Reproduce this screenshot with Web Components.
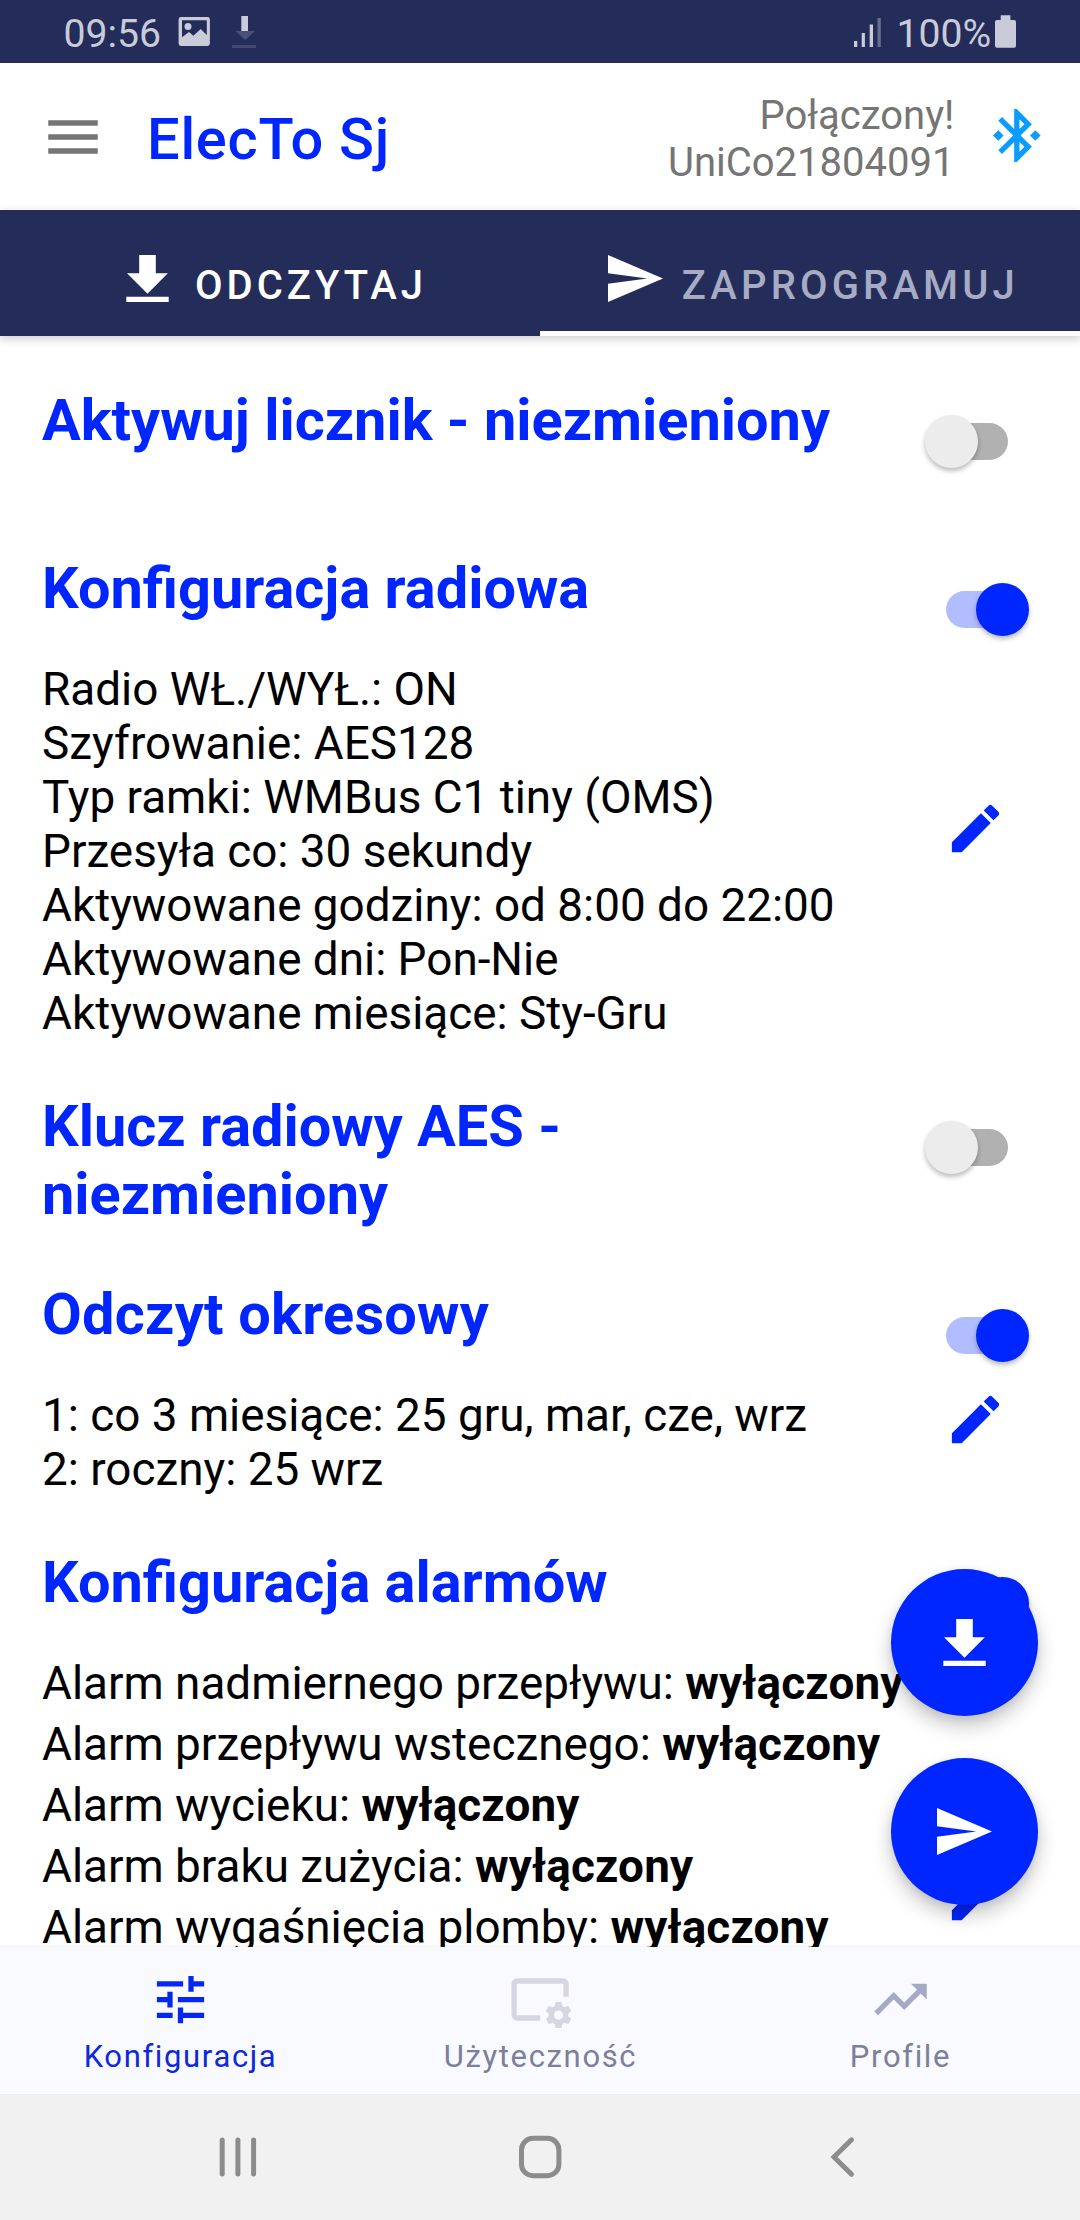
<!DOCTYPE html>
<html lang="pl">
<head>
<meta charset="utf-8">
<title>ElecTo Sj</title>
<style>
  html, body { margin: 0; padding: 0; background: #fff; }
  body { font-family: Roboto, "Noto Sans", sans-serif; width: 1080px; height: 2220px; overflow: hidden; }
</style>
</head>
<body>
<meter-app></meter-app>
<script>
const define = (name, html) => {
  const template = document.createElement('template');
  template.innerHTML = html;
  customElements.define(name, class extends HTMLElement {
    constructor() {
      super();
      this.attachShadow({ mode: 'open' }).append(template.content.cloneNode(true));
    }
  });
};

/* Icons: [viewBox, width, height, markup] */
const ICONS = {
  menu: ['0 0 24 24', 66, 66, '<path d="M3 18.1h18v-2H3zM3 13h18v-2H3zM3 5.9v2h18v-2z"/>'],
  bluetooth: ['3 2 18 20', 47.6, 53, '<path d="M7 12l-2-2-2 2 2 2 2-2zm10.71-4.29L12 2h-1v7.59L6.41 5 5 6.41 10.59 12 5 17.59 6.41 19 11 14.41V22h1l5.71-5.71-4.3-4.29 4.3-4.29zM13 5.83l1.88 1.88L13 9.59V5.83zm1.88 10.46L13 18.17v-3.76l1.88 1.88zM19 10l-2 2 2 2 2-2-2-2z"/>'],
  download: ['0 0 43 47', 43, 47, '<path d="M13.2 0h16.6v18.2h12L21.5 38.8 1 18.2h12.2zM.3 41.7h42.4V47H.3z"/>'],
  send: ['2 3 21 18', 55, 47, '<path d="M2 21l21-9L2 3v7l15 2-15 2z"/>'],
  edit: ['0 0 24 24', 63, 63, '<path d="M3 17.25V21h3.75L17.81 9.94l-3.75-3.75L3 17.25zM20.71 7.04c.39-.39.39-1.02 0-1.41l-2.34-2.34c-.39-.39-1.02-.39-1.41 0l-1.83 1.83 3.75 3.75 1.83-1.83z"/>'],
  tune: ['0 0 24 24', 63, 63, '<path d="M3 17v2h6v-2H3zM3 5v2h10V5H3zm10 16v-2h8v-2h-8v-2h-2v6h2zM7 9v2H3v2h4v2h2V9H7zm14 4v-2H11v2h10zm-6-4h2V7h4V5h-4V3h-2v6z"/>'],
  utility: ['508.5 1968 63 63', 63, 63, '<path fill="none" stroke="currentColor" stroke-width="5.3" d="M539.7 2018H516.6a3 3 0 0 1-3-3v-31a3 3 0 0 1 3-3h46a3 3 0 0 1 3 3v12.7"/><path transform="translate(542.4 1999.4) scale(1.3)" d="M19.43 12.98c.04-.32.07-.64.07-.98s-.03-.66-.07-.98l2.11-1.65c.19-.15.24-.42.12-.64l-2-3.46c-.12-.22-.39-.3-.61-.22l-2.49 1c-.52-.4-1.08-.73-1.69-.98l-.38-2.65C14.46 2.18 14.25 2 14 2h-4c-.25 0-.46.18-.49.42l-.38 2.65c-.61.25-1.17.59-1.69.98l-2.49-1c-.23-.09-.49 0-.61.22l-2 3.46c-.13.22-.07.49.12.64l2.11 1.65c-.04.32-.07.65-.07.98s.03.66.07.98l-2.11 1.65c-.19.15-.24.42-.12.64l2 3.46c.12.22.39.3.61.22l2.49-1c.52.4 1.08.73 1.69.98l.38 2.65c.03.24.24.42.49.42h4c.25 0 .46-.18.49-.42l.38-2.65c.61-.25 1.17-.59 1.69-.98l2.49 1c.23.09.49 0 .61-.22l2-3.46c.12-.22.07-.49-.12-.64l-2.11-1.65zM12 15.5c-1.93 0-3.5-1.57-3.5-3.5s1.57-3.5 3.5-3.5 3.5 1.57 3.5 3.5-1.57 3.5-3.5 3.5z"/>'],
  trend: ['0 0 24 24', 63, 63, '<path d="M16 6l2.29 2.29-4.88 4.88-4-4L2 16.59 3.41 18l6-6 4 4 6.3-6.29L22 12V6z"/>'],
  image: ['178 17 32 30', 32, 30, '<path fill-rule="evenodd" d="M181 17h26.5a2.4 2.4 0 0 1 2.4 2.4v24.2a2.4 2.4 0 0 1-2.4 2.4H181a2.4 2.4 0 0 1-2.4-2.4V19.4a2.4 2.4 0 0 1 2.4-2.4zM182 20.2V37.3l7-5.3 4.3 3.7 7.4-6.7 6.1 6V20.2z"/><circle cx="188" cy="26.5" r="3.5"/>'],
  status: ['232 16 24 32', 24, 32, '<path d="M241.3 16h6.7v15h-6.7z"/><path fill="#4a507a" d="M235.5 31H255l-9.8 9z"/><path fill="#434972" d="M232 45h24v3h-24z"/>'],
  signal: ['854 16 28 30', 28, 30, '<path d="M854 40h3.3v6H854zM861.7 32h3.2v14h-3.2zM869.7 23.5h3.3V46h-3.3z"/><path fill="#686e90" d="M877.5 17h3.3v29h-3.3z"/>'],
  battery: ['995 15 21 33', 21, 33, '<path d="M1000.7 15.3h9.7v4.7h3.6a2 2 0 0 1 2 2v23.7a2 2 0 0 1-2 2h-17a2 2 0 0 1-2-2V22a2 2 0 0 1 2-2h3.7z"/>'],
  recents: ['219 2136 38 42', 38, 42, '<path fill="none" stroke="currentColor" stroke-width="5" stroke-linecap="round" d="M222.2 2140v34M237.9 2140v34M253.6 2140v34"/>'],
  home: ['518 2135 44 44', 44, 44, '<rect x="521.5" y="2138.3" width="37.4" height="37.4" rx="11.5" fill="none" stroke="currentColor" stroke-width="5"/>'],
  back: ['830 2136 26 42', 26, 42, '<path fill="none" stroke="currentColor" stroke-width="5" stroke-linecap="round" d="M851.5 2139.8L834 2157l17.5 17.3"/>']
};
customElements.define('app-icon', class extends HTMLElement {
  connectedCallback() {
    const [box, w, h, body] = ICONS[this.getAttribute('name')];
    (this.shadowRoot || this.attachShadow({ mode: 'open' })).innerHTML =
      `<style>:host{display:block;flex:none;width:${w}px;height:${h}px}svg{display:block;fill:currentColor}</style>
       <svg width="${w}" height="${h}" viewBox="${box}" preserveAspectRatio="none">${body}</svg>`;
  }
});

define('status-bar', `
<style>
  :host { display: flex; justify-content: space-between; box-sizing: border-box; height: 63px;
    padding: 0 64px 0 63.5px; background: #242d5a; color: #c9cbd8; font-size: 39.2px; line-height: 46px; }
  .group { display: flex; align-items: flex-start; padding-top: 10.5px; }
  app-icon { margin-top: 6.5px; }
  .pic { margin-left: 17px; } .dl { margin: 5.5px 0 0 22px; }
  .pct { margin-left: 14.5px; width: 98.5px; } .bat { margin-top: 4.5px; }
</style>
<div class="group"><span>09:56</span><app-icon class="pic" name="image"></app-icon><app-icon class="dl" name="status"></app-icon></div>
<div class="group"><app-icon name="signal"></app-icon><span class="pct">100%</span><app-icon class="bat" name="battery"></app-icon></div>`);

define('app-header', `
<style>
  :host { display: flex; align-items: center; box-sizing: border-box; height: 147px; padding: 0 40px; background: #fff; }
  .menu { color: #757575; }
  h1 { margin: 4px 0 0 41px; flex: 1; font-weight: 500; font-size: 57.75px; line-height: 68px; letter-spacing: .75px; color: #0026ff; }
  .device { margin: 4px 38.5px 0 0; text-align: right; font-size: 40px; line-height: 47px; color: #757575; }
  .bt { color: #0a9dff; margin: -2px -.5px 0 0; }
</style>
<app-icon class="menu" name="menu"></app-icon>
<h1>ElecTo Sj</h1>
<div class="device">Połączony!<br>UniCo21804091</div>
<app-icon class="bt" name="bluetooth"></app-icon>`);

define('tab-item', `
<style>
  :host { display: flex; flex: none; width: 540px; box-sizing: border-box; height: 126px; padding-top: 45px; color: #fff;
    font-weight: 500; font-size: 40px; line-height: 47px; letter-spacing: 4px; white-space: nowrap; }
  :host([selected]) { border-bottom: 5px solid #fff; }
  .label { padding-top: 6.5px; }
  :host([selected]) .label { color: #a7abc4; }
</style>
<slot name="icon"></slot><span class="label"><slot></slot></span>`);

define('tab-bar', `
<style>
  :host { display: flex; position: relative; z-index: 1; height: 126px; background: #242d5a; box-shadow: 0 3px 9px rgba(0,0,0,.2); }
  .read { padding-left: 126px; } .read app-icon { margin-right: 26px; }
  .write { padding-left: 68px; letter-spacing: 4.15px; } .write app-icon { margin-right: 18.8px; }
</style>
<tab-item class="read"><app-icon slot="icon" name="download"></app-icon>ODCZYTAJ</tab-item>
<tab-item class="write" selected><app-icon slot="icon" name="send"></app-icon>ZAPROGRAMUJ</tab-item>`);

define('toggle-switch', `
<style>
  :host { display: flex; align-items: center; flex: none; width: 83.5px; height: 54px; margin-right: 72px; --track: #b1b1b1; --thumb: #ececec; }
  :host([on]) { margin-right: 51px; --track: #b2bdff; --thumb: #0026ff; flex-direction: row-reverse; }
  .thumb { flex: none; width: 53.5px; height: 53.5px; border-radius: 50%; background: var(--thumb); box-shadow: 0 3px 5px rgba(0,0,0,.27); z-index: 1; }
  .track { width: 62px; height: 37px; margin-left: -32px; border-radius: 18.5px; background: var(--track); }
  :host([on]) .track { margin: 0 -32px 0 0; }
</style>
<div class="thumb"></div><div class="track"></div>`);

define('config-section', `
<style>
  :host { display: block; margin-bottom: 52px; }
  header { display: flex; align-items: flex-start; justify-content: space-between; }
  h2 { margin: 0; width: 830px; font-weight: 700; font-size: 57.7px; line-height: 68px; color: #0026ff; }
  .switch { height: 68px; padding-top: 28px; box-sizing: border-box; }
  .body { display: flex; align-items: center; justify-content: space-between; }
  .text { margin-top: 40px; font-size: 45.85px; line-height: 54px; color: #000; white-space: nowrap; }
</style>
<header><h2><slot name="title"></slot></h2><div class="switch"><slot name="switch"></slot></div></header>
<div class="body"><div class="text"><slot></slot></div><slot name="action"></slot></div>`);

define('edit-button', `
<style>:host { display: block; color: #0026ff; margin: -6px 73px 0 0; }</style>
<app-icon name="edit"></app-icon>`);

define('alarm-row', `
<style>:host { display: block; height: 61px; } b { font-weight: 700; letter-spacing: .15px; }</style>
<slot></slot> <b>wyłączony</b>`);

define('round-button', `
<style>:host { display: flex; align-items: center; justify-content: center; width: 147px; height: 147px; border-radius: 50%;
  background: #0026ff; color: #fff; box-shadow: 0 10px 20px rgba(0,0,0,.22), 0 3px 8px rgba(0,0,0,.08); }</style>
<slot></slot>`);

define('nav-item', `
<style>:host { display: flex; flex: 1; flex-direction: column; align-items: center; padding-top: 21px; box-sizing: border-box;
  font-size: 31px; line-height: 36px; letter-spacing: 1.65px; color: #7c7f9a; }
  span { margin-top: 8px; padding-left: 1px; }</style>
<slot name="icon"></slot><span><slot></slot></span>`);

define('bottom-nav', `
<style>
  :host { display: flex; height: 147px; background: #f9faff; position: relative; box-shadow: 0 -1px 3px rgba(40,40,90,.07); }
  .active { color: #0f28dc; } .active app-icon { color: #0626f2; }
  .util app-icon { color: #d5d6e2; } .prof app-icon { color: #a6a9c4; }
</style>
<nav-item class="active"><app-icon slot="icon" name="tune"></app-icon>Konfiguracja</nav-item>
<nav-item class="util"><app-icon slot="icon" name="utility"></app-icon>Użyteczność</nav-item>
<nav-item class="prof"><app-icon slot="icon" name="trend"></app-icon>Profile</nav-item>`);

define('system-nav', `
<style>:host { display: flex; align-items: center; box-sizing: border-box; height: 126px; padding-left: 219px; background: #f1f1f1; color: #8c8c8c; }
  .home { margin-left: 261px; } .back { margin-left: 268px; }</style>
<app-icon name="recents"></app-icon><app-icon class="home" name="home"></app-icon><app-icon class="back" name="back"></app-icon>`);

define('meter-app', `
<style>
  :host { display: flex; flex-direction: column; position: relative; width: 1080px; height: 2220px; overflow: hidden; }
  main { flex: 1; min-height: 0; overflow: hidden; padding: 50.4px 0 0 42px; box-sizing: border-box; background: #fff; isolation: isolate; }
  .plain { margin-bottom: 60px; }
  .key { margin-bottom: 12px; }
  .periodic { letter-spacing: .25px; }
  .alarms { display: block; height: 526px; }
  .fabs { position: absolute; z-index: 3; right: 42px; top: 1569px; display: flex; flex-direction: column; gap: 42px; }
</style>
<status-bar></status-bar>
<app-header></app-header>
<tab-bar></tab-bar>
<main>
  <config-section class="plain"><span slot="title">Aktywuj licznik - niezmieniony</span><toggle-switch slot="switch"></toggle-switch></config-section>
  <config-section><span slot="title">Konfiguracja radiowa</span><toggle-switch slot="switch" on></toggle-switch>
    Radio WŁ./WYŁ.: ON<br>Szyfrowanie: AES128<br>Typ ramki: WMBus C1 tiny (OMS)<br>Przesyła co: 30 sekundy<br>Aktywowane godziny: od 8:00 do 22:00<br>Aktywowane dni: Pon-Nie<br>Aktywowane miesiące: Sty-Gru
    <edit-button slot="action"></edit-button></config-section>
  <config-section class="key"><span slot="title">Klucz radiowy AES - niezmieniony</span><toggle-switch slot="switch"></toggle-switch></config-section>
  <config-section><span slot="title" class="periodic">Odczyt okresowy</span><toggle-switch slot="switch" on></toggle-switch>
    1: co 3 miesiące: 25 gru, mar, cze, wrz<br>2: roczny: 25 wrz
    <edit-button slot="action"></edit-button></config-section>
  <config-section><span slot="title">Konfiguracja alarmów</span><toggle-switch slot="switch" on></toggle-switch>
    <div class="alarms">
      <alarm-row>Alarm nadmiernego przepływu:</alarm-row>
      <alarm-row>Alarm przepływu wstecznego:</alarm-row>
      <alarm-row>Alarm wycieku:</alarm-row>
      <alarm-row>Alarm braku zużycia:</alarm-row>
      <alarm-row>Alarm wygaśnięcia plomby:</alarm-row>
    </div>
    <edit-button slot="action"></edit-button></config-section>
</main>
<bottom-nav></bottom-nav>
<system-nav></system-nav>
<div class="fabs">
  <round-button><app-icon name="download"></app-icon></round-button>
  <round-button><app-icon name="send"></app-icon></round-button>
</div>`);
</script>
</body>
</html>
